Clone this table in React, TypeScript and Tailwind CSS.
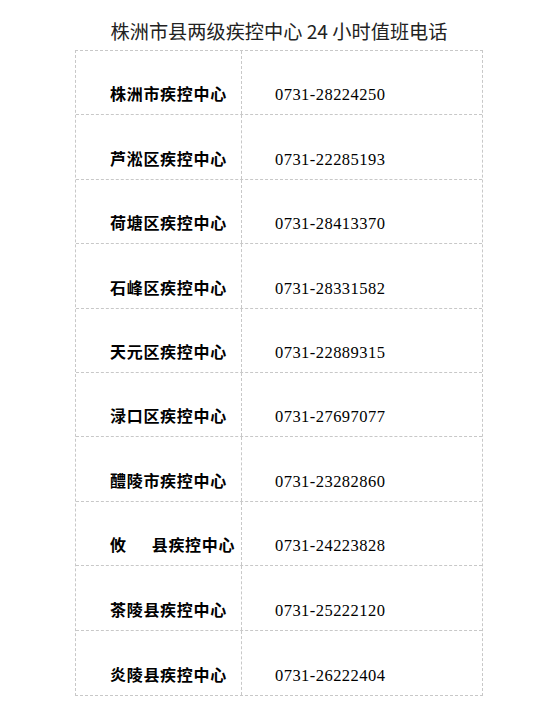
const rows: [string, string][] = [
  ["株洲市疾控中心", "0731-28224250"],
  ["芦淞区疾控中心", "0731-22285193"],
  ["荷塘区疾控中心", "0731-28413370"],
  ["石峰区疾控中心", "0731-28331582"],
  ["天元区疾控中心", "0731-22889315"],
  ["渌口区疾控中心", "0731-27697077"],
  ["醴陵市疾控中心", "0731-23282860"],
  ["攸县疾控中心", "0731-24223828"],
  ["茶陵县疾控中心", "0731-25222120"],
  ["炎陵县疾控中心", "0731-26222404"],
];

function Name({ text }: { text: string }) {
  if (text.startsWith("攸")) {
    return (
      <span>
        攸<span className="inline-block w-[25px]" />
        {text.slice(1)}
      </span>
    );
  }
  return <span>{text}</span>;
}

export default function App() {
  return (
    <div className="min-h-[721px] w-[535px] bg-white">
      <h1 className="ml-[75px] w-[408px] pt-[19px] text-center text-[19.2px] leading-[24px] text-[#222] [font-family:'Noto_Sans_CJK_SC',sans-serif]">
        株洲市县两级疾控中心 24 小时值班电话
      </h1>
      <div className="ml-[75px] mt-[7px] w-[408px] border border-dashed border-[#c8c8c8]">
        {rows.map(([name, phone], i) => (
          <div
            key={name}
            className={
              "grid h-[64.4px] grid-cols-[166px_1fr] " +
              (i < rows.length - 1 ? "border-b border-dashed border-[#c8c8c8]" : "")
            }
          >
            <div className="flex items-end border-r border-dashed border-[#c8c8c8] pb-[10px] pl-[34px] text-[16px] leading-[22px] font-bold tracking-[0.7px] text-black [font-family:'Noto_Sans_CJK_SC',sans-serif]">
              <Name text={name} />
            </div>
            <div className="flex items-end pb-[8px] pl-[33px] text-[16.5px] leading-[22px] tracking-[0.45px] text-black [font-family:'Liberation_Serif',serif]">
              {phone}
            </div>
          </div>
        ))}
      </div>
    </div>
  );
}
